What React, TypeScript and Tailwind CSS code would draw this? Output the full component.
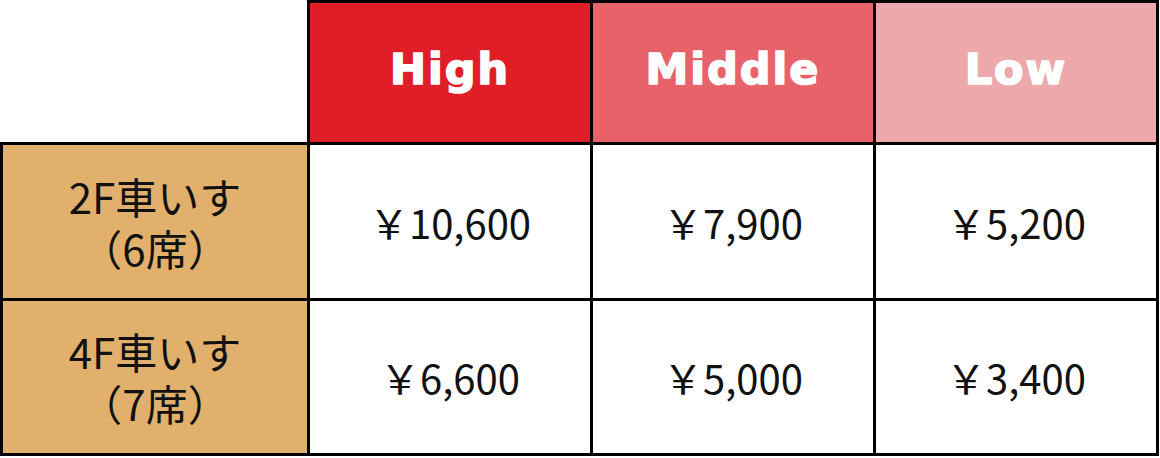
import React from "react";

const headers = [
  { label: "High", bg: "bg-[#df1e27]" },
  { label: "Middle", bg: "bg-[#e8626a]" },
  { label: "Low", bg: "bg-[#eca8aa]" },
];

const rows = [
  { l1: "2F車いす", l2: "（6席）", prices: ["￥10,600", "￥7,900", "￥5,200"], h: "h-[156px]" },
  { l1: "4F車いす", l2: "（7席）", prices: ["￥6,600", "￥5,000", "￥3,400"], h: "h-[155px]" },
];

const jp = { fontFamily: '"Noto Sans CJK JP", "Noto Sans", sans-serif' };

export default function App() {
  return (
    <div className="w-[1160px] h-[458px] bg-white overflow-hidden">
      <div className="flex h-[145px]">
        <div className="w-[310px] h-full border-r-[3px] border-b-[3px] border-black bg-white" />
        {headers.map((h) => (
          <div
            key={h.label}
            className={`w-[283px] h-full border-t-[3px] border-r-[3px] border-b-[3px] border-black ${h.bg} flex items-center justify-center pb-[6px]`}
          >
            <span
              className="text-white text-[43px] font-bold tracking-[2px] leading-none [-webkit-text-stroke:1.6px_white]"
              style={{ fontFamily: '"DejaVu Sans", sans-serif' }}
            >
              {h.label}
            </span>
          </div>
        ))}
      </div>
      {rows.map((r, i) => (
        <div key={i} className={`flex ${r.h}`}>
          <div
            className="w-[310px] h-full border-l-[3px] border-r-[3px] border-b-[3px] border-black bg-[#e1b06c] flex flex-col items-center justify-center gap-[10px] text-[42px] leading-none text-[#111]"
            style={jp}
          >
            <span>{r.l1}</span>
            <span>{r.l2}</span>
          </div>
          {r.prices.map((p) => (
            <div
              key={p}
              className="w-[283px] h-full border-r-[3px] border-b-[3px] border-black bg-white flex items-center justify-center text-[40px] leading-none text-[#111]"
              style={jp}
            >
              {p}
            </div>
          ))}
        </div>
      ))}
    </div>
  );
}
